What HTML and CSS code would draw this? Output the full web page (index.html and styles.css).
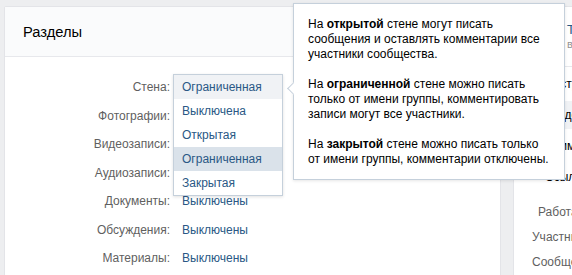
FILE: index.html
```html
<!DOCTYPE html>
<html>
<head>
    <meta charset="utf-8">
    <link rel="stylesheet" href="styles.css">
    <title>Разделы</title>
</head>
<body>
    <div class="page">
        <div class="card">
            <div class="card-head">Разделы</div>
            <div class="card-body">
                <div class="row wall-row">
                    <div class="label">Стена:</div>
                    <div class="value">Ограниченная</div>

                    <!-- open dropdown -->
                    <div class="dropdown">
                        <div class="dd-item current">Ограниченная</div>
                        <div class="dd-item">Выключена</div>
                        <div class="dd-item">Открытая</div>
                        <div class="dd-item hover">Ограниченная</div>
                        <div class="dd-item">Закрытая</div>
                    </div>

                    <!-- hint for the wall -->
                    <div class="tip">
                        <span class="tip-arrow"></span>
                        <p>На <b>открытой</b> стене могут писать сообщения и оставлять комментарии все участники сообщества.</p>
                        <p>На <b>ограниченной</b> стене можно писать только от имени группы, комментировать записи могут все участники.</p>
                        <p>На <b>закрытой</b> стене можно писать только от имени группы, комментарии отключены.</p>
                    </div>
                </div>
                <div class="row"><div class="label">Фотографии:</div><div class="value">Открыты</div></div>
                <div class="row"><div class="label">Видеозаписи:</div><div class="value">Открыты</div></div>
                <div class="row"><div class="label">Аудиозаписи:</div><div class="value">Открыты</div></div>
                <div class="row"><div class="label">Документы:</div><div class="value">Выключены</div></div>
                <div class="row"><div class="label">Обсуждения:</div><div class="value">Выключены</div></div>
                <div class="row"><div class="label">Материалы:</div><div class="value">Выключены</div></div>
            </div>
        </div>

        <div class="side">
            <div class="side-head">
                <div class="group-name">Тестовое сообщество</div>
                <div class="group-back">вернуться к сообществу</div>
            </div>
            <div class="menu">
                <div class="menu-item">Настройки</div>
                <div class="menu-item active">Разделы</div>
                <div class="menu-item">Комментарии</div>
                <div class="menu-item">Ссылки</div>
            </div>
            <div class="menu menu-low">
                <div class="menu-item api">Работа с API</div>
                <div class="menu-item">Участники</div>
                <div class="menu-item">Сообщения</div>
            </div>
        </div>
    </div>
</body>
</html>
```

FILE: styles.css
```css
html, body {
    margin: 0;
    background: #edeef0;
    overflow: hidden;
}
body {
    font-family: "Liberation Sans", Arial, sans-serif;
    font-size: 12px;
    color: #000;
}
.page {
    display: flex;
    gap: 12px;
    padding: 6px 0 0 4px;
    width: 760px;
}
.card {
    width: 495px;
    height: 300px;
    background: #fff;
    border: 1px solid #e3e4e8;
    border-radius: 2px;
    flex: none;
}
.card-head {
    height: 49px;
    line-height: 50px;
    padding-left: 18px;
    font-size: 14.7px;
    background: #fafbfc;
    border-bottom: 1px solid #e7e8ec;
}
.card-body {
    padding-top: 16px;
}
.row {
    display: flex;
    align-items: center;
    gap: 12px;
    height: 28.5px;
}
.wall-row {
    position: relative;
}
.label {
    width: 165px;
    text-align: right;
    color: #5f5f5f;
}
.value {
    color: #2a5885;
}

.dropdown {
    position: absolute;
    left: 168px;
    top: 1px;
    width: 108px;
    background: #fff;
    border: 1px solid #c5d0db;
    box-shadow: 0 1px 3px rgba(0, 0, 0, 0.12);
}
.dd-item {
    height: 24px;
    line-height: 24px;
    padding-left: 8px;
    color: #2a5885;
}
.dd-item.current {
    background: #f0f2f5;
}
.dd-item.hover {
    background: #dae2ea;
}

.tip {
    position: absolute;
    left: 288px;
    top: -70px;
    width: 243px;
    padding: 13px 13px 12px 14px;
    background: #fff;
    border: 1px solid #c5d0db;
    box-shadow: 0 1px 3px rgba(0, 0, 0, 0.1);
    line-height: 15px;
    color: #000;
}
.tip p {
    margin: 0 0 15px;
}
.tip p:last-child {
    margin-bottom: 0;
}
.tip-arrow {
    position: absolute;
    left: -5px;
    top: 80px;
    width: 8px;
    height: 8px;
    background: #fff;
    border-left: 1px solid #c5d0db;
    border-bottom: 1px solid #c5d0db;
    transform: rotate(45deg);
}

.side {
    width: 230px;
    height: 300px;
    background: #fff;
    border: 1px solid #e3e4e8;
    flex: none;
}
.side-head {
    display: flex;
    flex-direction: column;
    justify-content: center;
    height: 59px;
    padding-left: 53px;
    border-bottom: 1px solid #e7e8ec;
}
.group-name {
    color: #2a5885;
    font-size: 13px;
    line-height: 15px;
}
.group-back {
    color: #939393;
    font-size: 11px;
    line-height: 14px;
}
.menu {
    padding-top: 3px;
}
.menu-item {
    height: 28px;
    line-height: 28px;
    margin-bottom: 3px;
    padding-left: 31px;
    color: #000;
}
.menu-item.active {
    background: #f0f2f5;
}
.menu-low {
    padding-top: 6px;
}
.menu-low .menu-item {
    height: 25px;
    line-height: 25px;
    margin-bottom: 0;
    padding-left: 18px;
    color: #5f5f5f;
}
.menu-low .api {
    padding-left: 24px;
}
```
